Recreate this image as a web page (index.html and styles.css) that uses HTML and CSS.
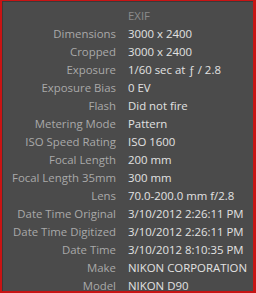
FILE: index.html
```html
<!DOCTYPE html>
<html>
<head>
<meta charset="utf-8">
<link rel="stylesheet" href="styles.css">
</head>
<body>
<div class="panel">
  <div class="meta">
    <div class="row head"><span class="key"></span><span class="val">EXIF</span></div>
    <div class="row"><span class="key">Dimensions</span><span class="val">3000 x 2400</span></div>
    <div class="row"><span class="key">Cropped</span><span class="val">3000 x 2400</span></div>
    <div class="row"><span class="key">Exposure</span><span class="val">1/60 sec at ƒ / 2.8</span></div>
    <div class="row"><span class="key">Exposure Bias</span><span class="val">0 EV</span></div>
    <div class="row"><span class="key">Flash</span><span class="val">Did not fire</span></div>
    <div class="row"><span class="key">Metering Mode</span><span class="val">Pattern</span></div>
    <div class="row"><span class="key">ISO Speed Rating</span><span class="val">ISO 1600</span></div>
    <div class="row"><span class="key">Focal Length</span><span class="val">200 mm</span></div>
    <div class="row"><span class="key">Focal Length 35mm</span><span class="val">300 mm</span></div>
    <div class="row"><span class="key">Lens</span><span class="val">70.0-200.0 mm f/2.8</span></div>
    <div class="row"><span class="key">Date Time Original</span><span class="val">3/10/2012 2:26:11 PM</span></div>
    <div class="row"><span class="key">Date Time Digitized</span><span class="val">3/10/2012 2:26:11 PM</span></div>
    <div class="row"><span class="key">Date Time</span><span class="val">3/10/2012 8:10:35 PM</span></div>
    <div class="row"><span class="key">Make</span><span class="val">NIKON CORPORATION</span></div>
    <div class="row"><span class="key">Model</span><span class="val">NIKON D90</span></div>
  </div>
</div>
</body>
</html>
```
FILE: styles.css
```css
html, body {
  margin: 0;
  padding: 0;
  background: #d01818;
}
/* metadata panel with its red selection frame */
.panel {
  box-sizing: border-box;
  width: 256px;
  height: 293px;
  border-style: solid;
  border-color: #c81414;
  border-width: 1px 3px 2px 2px;
  background: #4b4b4b;
  box-shadow: inset 1px 1px 0 #3a3a3a;
  overflow: hidden;
  font-family: "Open Sans", sans-serif;
  font-size: 11.4px;
}
.meta {
  display: flex;
  flex-direction: column;
  padding-top: 6px;
}
.row {
  display: grid;
  grid-template-columns: 114px 1fr;
  column-gap: 12px;
  height: 18px;
  line-height: 17px;
  white-space: nowrap;
}
.key {
  text-align: right;
  color: #a9a9a9;
}
.val {
  color: #e2e2e2;
}
.head .val {
  color: #8c8c8c;
}
```
